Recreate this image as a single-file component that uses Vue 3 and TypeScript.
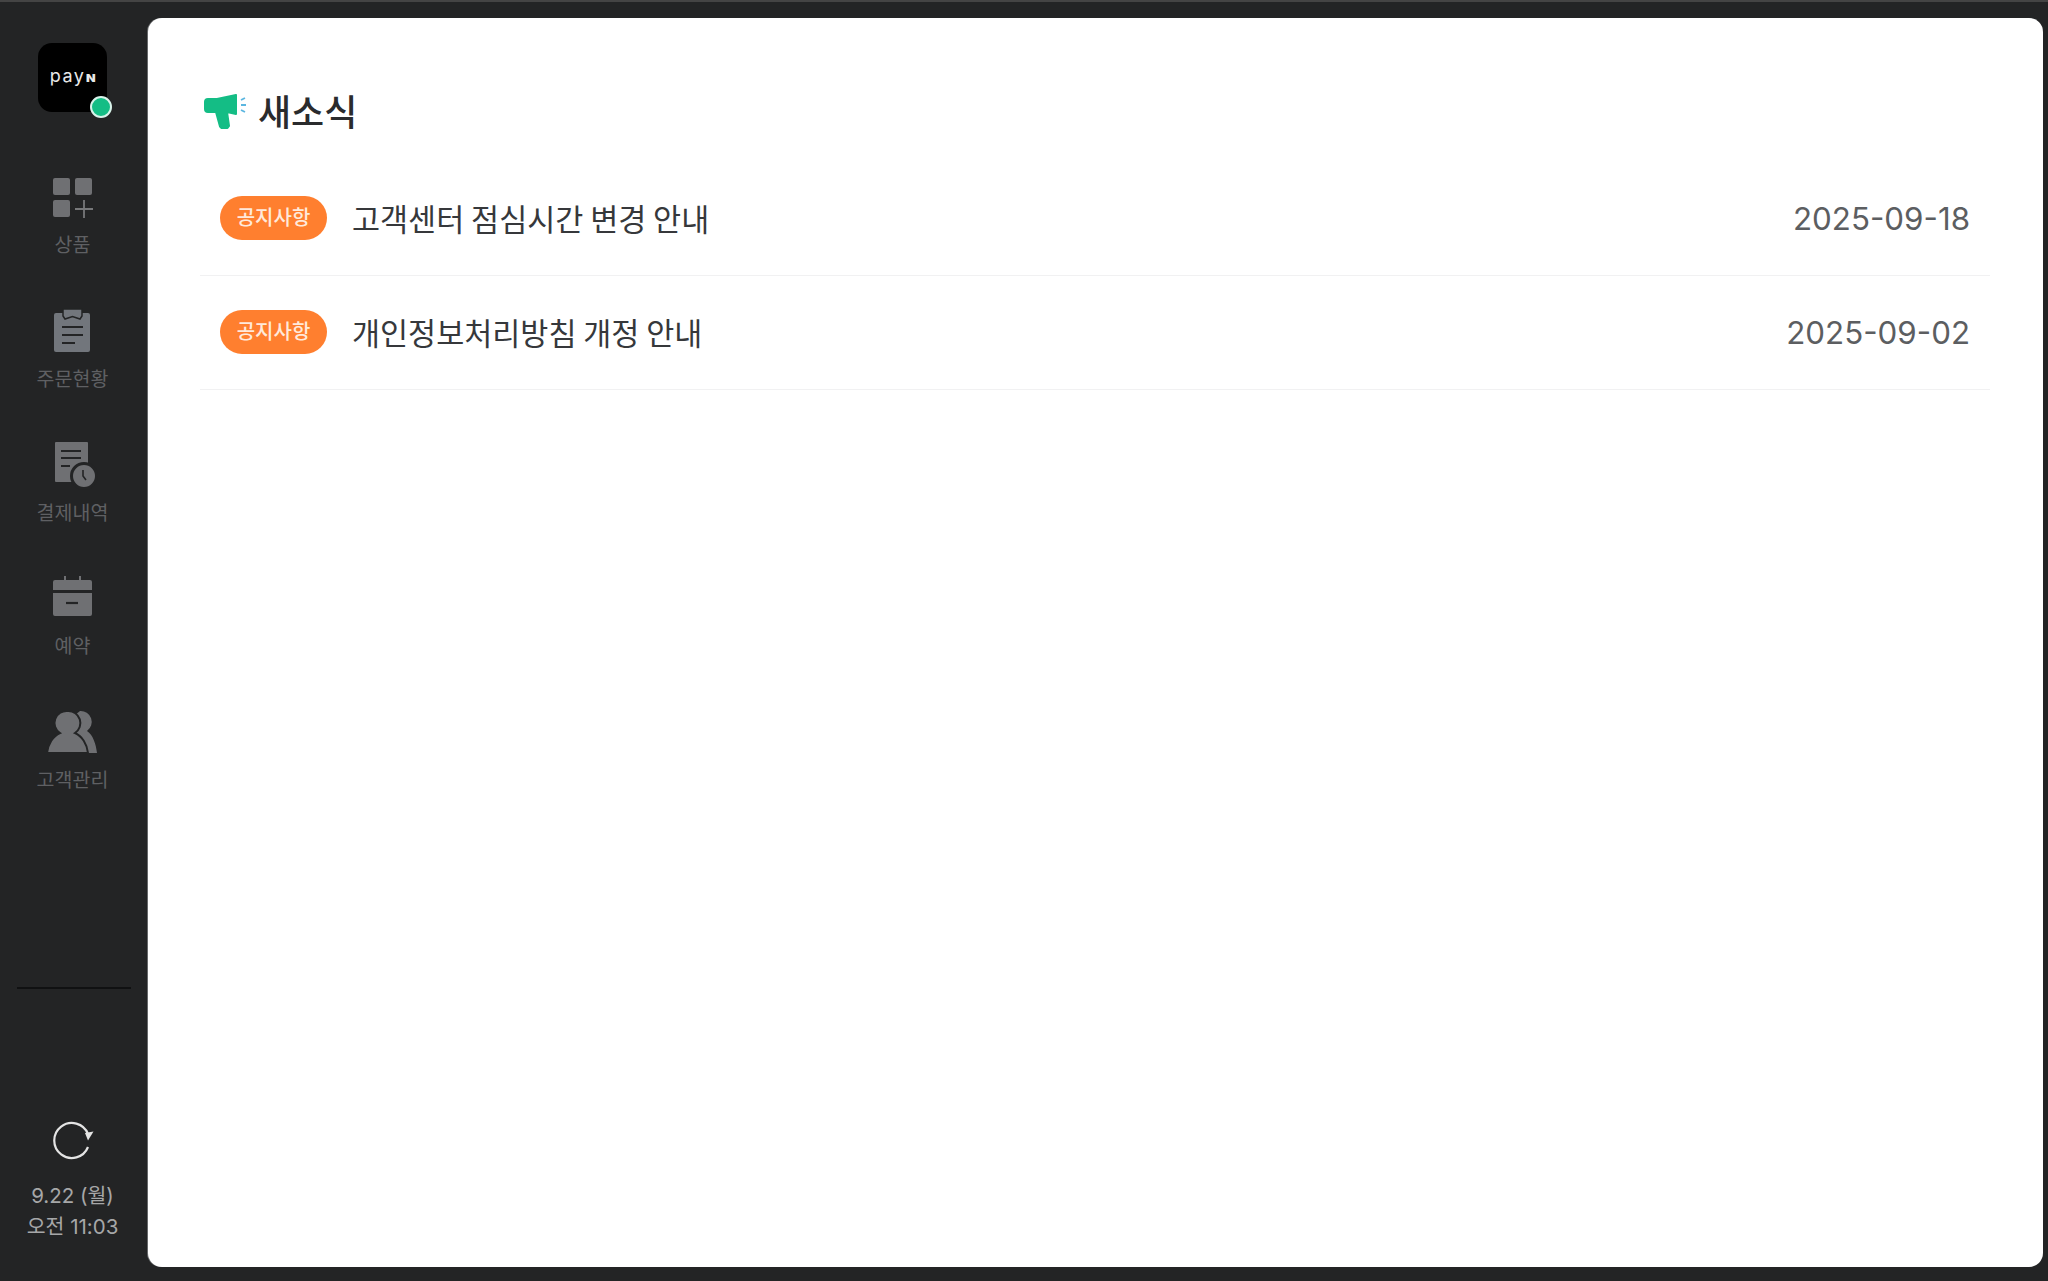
<template>
  <div class="app">
    <aside class="sidebar">
      <div class="logo">
        <span class="logo-text">pay<b>N</b></span>
        <span class="status"></span>
      </div>
      <nav class="nav">
        <a v-for="item in menu" :key="item.key" class="nav-item">
          <svg class="nav-icon" viewBox="0 0 44 44">
            <template v-if="item.key === 'product'">
              <rect x="3" y="2" width="17" height="17" rx="2" />
              <rect x="25" y="2" width="17" height="17" rx="2" />
              <rect x="3" y="24" width="17" height="17" rx="2" />
              <path class="thin" d="M25 33h18M34 24v18" />
            </template>
            <template v-else-if="item.key === 'order'">
              <path class="cool" d="M6 3h32a2 2 0 0 1 2 2v35a2 2 0 0 1-2 2H6a2 2 0 0 1-2-2V5a2 2 0 0 1 2-2z" />
              <path class="clip" d="M13-1h19v7l-2 3-7.500-2.500L15 9l-2-3z" />
              <path class="cut" d="M12 17h21M12 25h21M12 33h13" />
            </template>
            <template v-else-if="item.key === 'payment'">
              <path d="M6-2h31a1 1 0 0 1 1 1v39H6a1 1 0 0 1-1-1V-1a1 1 0 0 1 1-1z" />
              <path class="cut" d="M11 7h20M11 14h20M11 22h9" />
              <circle class="ring" cx="34" cy="32" r="12.500" />
              <path class="cut thin-cut" d="M33 26v6l3 4" />
            </template>
            <template v-else-if="item.key === 'reserve'">
              <path d="M5 3h35a2 2 0 0 1 2 2v8H3V5a2 2 0 0 1 2-2zM3 16h39v21a2 2 0 0 1-2 2H5a2 2 0 0 1-2-2z" />
              <path class="pin" d="M15-1v4M30-1v4" />
              <path class="cut" d="M16 26h12" />
            </template>
            <template v-else>
              <path d="M30 0a11 11 0 0 1 7 20c6 4 9 13 10 22H30L20 8z" />
              <path class="ring thin-ring" d="M18 0a12 12 0 0 1 7 22c7 3 12 11 13 20H-3c1-9 6-17 13-20a12 12 0 0 1 8-22z" />
            </template>
          </svg>
          <span class="nav-label">{{ item.label }}</span>
        </a>
      </nav>
      <div class="side-line"></div>
      <div class="side-bottom">
        <svg class="refresh" viewBox="0 0 44 44" fill="none">
          <path d="M38 29A17.500 17.500 0 1 1 38 16" />
          <path class="arrow" d="M35 15l8.500-1.500-5.500 9z" />
        </svg>
        <div class="clock">
          <div>9.22 (월)</div>
          <div>오전 11:03</div>
        </div>
      </div>
    </aside>

    <main class="card">
      <h1 class="title">
        <svg class="title-icon" viewBox="0 0 46 38">
          <path class="mega" d="M5 5h9L33 1v19l-9-2 2 14-1.500 2h-6l-1.500-1.500L13 18H5a3 3 0 0 1-3-3V8a3 3 0 0 1 3-3z" />
          <path class="waves" d="M38 6l4-2M38 11h5M38 16l4 2" />
        </svg>
        새소식
      </h1>
      <ul class="list">
        <li v-for="row in notices" :key="row.date" class="row">
          <span class="badge">공지사항</span>
          <span class="subject">{{ row.subject }}</span>
          <span class="date">{{ row.date }}</span>
        </li>
      </ul>
    </main>
  </div>
</template>

<script setup lang="ts">
const menu = [
  { key: 'product', label: '상품' },
  { key: 'order', label: '주문현황' },
  { key: 'payment', label: '결제내역' },
  { key: 'reserve', label: '예약' },
  { key: 'customer', label: '고객관리' },
]

const notices = [
  { subject: '고객센터 점심시간 변경 안내', date: '2025-09-18' },
  { subject: '개인정보처리방침 개정 안내', date: '2025-09-02' },
]
</script>

<style>
html,
body {
  margin: 0;
  background: #232425;
}
</style>

<style scoped>
.app {
  display: flex;
  height: 1281px;
  box-sizing: border-box;
  padding: 16px 5px 14px 0;
  background: #232425;
  border-top: 2px solid #444;
  font-family: "Noto Sans CJK KR", "Inter", sans-serif;
}
.sidebar {
  width: 148px;
  flex: none;
  display: flex;
  flex-direction: column;
  align-items: center;
  padding-top: 25px;
  box-sizing: border-box;
}
.logo {
  position: relative;
  width: 69px;
  height: 69px;
  margin-right: 3px;
  background: #000;
  border-radius: 14px;
  display: flex;
  align-items: center;
  justify-content: center;
  flex: none;
}
.logo-text {
  color: #e8e8e8;
  font-family: "Inter", sans-serif;
  font-size: 18px;
  letter-spacing: 1.500px;
  line-height: 1;
  margin-top: -3px;
}
.logo-text b {
  display: inline-block;
  font-size: 10px;
  font-weight: 900;
  margin-left: 2px;
  letter-spacing: 0;
  transform: scaleX(1.250);
}
.status {
  position: absolute;
  right: -5px;
  bottom: -6px;
  width: 18px;
  height: 18px;
  border-radius: 50%;
  background: #14bd85;
  border: 2px solid #d8f3ea;
}
.nav {
  margin-top: 58px;
  display: flex;
  flex-direction: column;
  align-items: center;
}
.nav-item {
  height: 133.800px;
  padding-top: 6px;
  box-sizing: border-box;
  display: flex;
  flex-direction: column;
  align-items: center;
  margin-right: 3px;
}
.nav-icon {
  width: 44px;
  height: 44px;
  overflow: visible;
  fill: #6f7073;
  flex: none;
}
.cool {
  fill: #72767c;
}
.clip {
  fill: #72767c;
  stroke: #232425;
  stroke-width: 1.500;
}
.thin {
  fill: none;
  stroke: #77787a;
  stroke-width: 1.800;
}
.cut {
  fill: none;
  stroke: #232425;
  stroke-width: 2.200;
}
.thin-cut {
  stroke-width: 1.600;
}
.pin {
  fill: none;
  stroke: #6f7073;
  stroke-width: 2;
}
.ring {
  stroke: #232425;
  stroke-width: 3;
}
.thin-ring {
  stroke-width: 2;
}
.nav-label {
  margin-top: 12px;
  color: #5f6063;
  font-size: 19.500px;
  line-height: 24px;
  white-space: nowrap;
}
.side-line {
  width: 114px;
  height: 2px;
  margin-top: 148px;
  background: #101112;
  flex: none;
}
.side-bottom {
  margin-top: auto;
  margin-bottom: 25px;
  display: flex;
  flex-direction: column;
  align-items: center;
  margin-right: 3px;
}
.refresh {
  width: 44px;
  height: 44px;
  stroke: #e4e4e4;
  stroke-width: 2.200;
}
.arrow {
  fill: #e4e4e4;
  stroke: none;
}
.clock {
  margin-top: 18px;
  color: #a6a7a8;
  font-family: "Inter", "Noto Sans CJK KR", sans-serif;
  font-size: 20.500px;
  line-height: 31px;
  text-align: center;
  white-space: nowrap;
}
.card {
  flex: 1;
  min-width: 0;
  background: #fff;
  border-radius: 14px;
  padding: 0 53px 0 52px;
  box-shadow: -1px 0 0 #66686a;
}
.title {
  margin: 0;
  height: 143px;
  padding-top: 70px;
  box-sizing: border-box;
  display: flex;
  align-items: flex-start;
  gap: 9px;
  font-size: 36px;
  font-weight: 500;
  line-height: 44px;
  color: #2a2b2d;
}
.title-icon {
  width: 46px;
  height: 38px;
  flex: none;
  margin: 6px 0 0 3px;
}
.mega {
  fill: #14bd85;
  stroke: #14bd85;
  stroke-width: 2;
  stroke-linejoin: round;
}
.waves {
  fill: none;
  stroke: #5bb6e0;
  stroke-width: 1.800;
}
.list {
  margin: 0;
  padding: 0;
  list-style: none;
}
.row {
  height: 114.500px;
  box-sizing: border-box;
  padding: 0 20px;
  display: flex;
  align-items: center;
  border-bottom: 1px solid #f1f1f2;
}
.badge {
  width: 107px;
  height: 44px;
  flex: none;
  border-radius: 22px;
  background: #ff7f2f;
  color: #ffe9db;
  font-size: 20px;
  font-weight: 500;
  line-height: 42px;
  text-align: center;
}
.subject {
  margin-left: 25px;
  font-size: 30.500px;
  color: #36383b;
  white-space: nowrap;
}
.date {
  margin: 2px 0 0 auto;
  font-family: "Inter", sans-serif;
  font-size: 31.300px;
  color: #5c5e61;
}
</style>
